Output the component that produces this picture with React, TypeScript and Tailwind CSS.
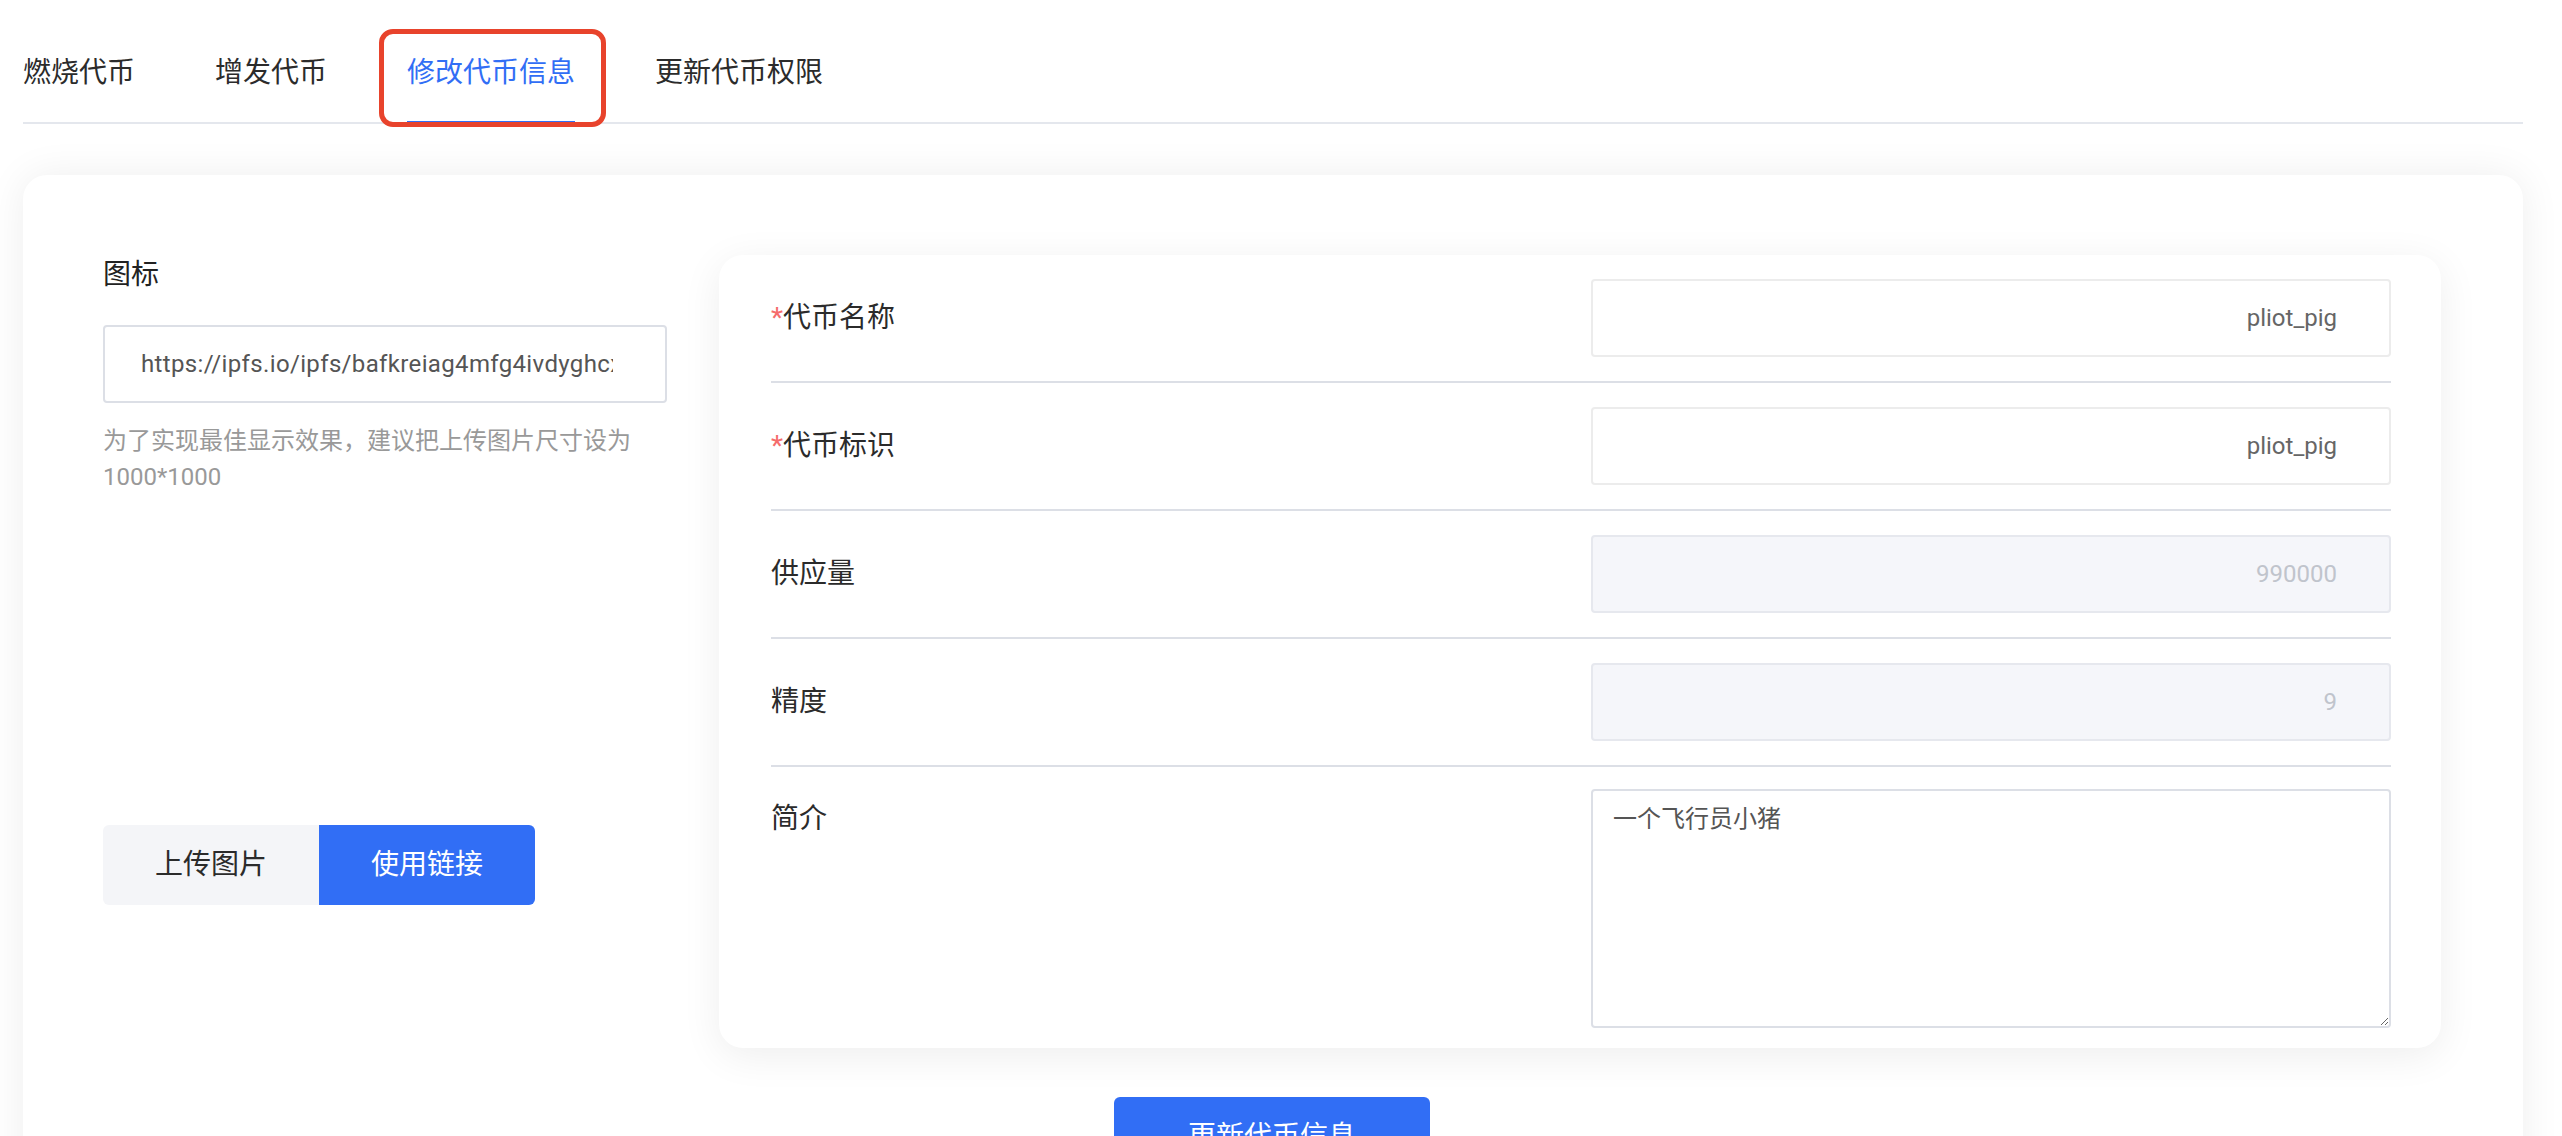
import React from "react";

const tabs = ["燃烧代币", "增发代币", "修改代币信息", "更新代币权限"];

function Row({
  label,
  required,
  value,
  disabled,
}: {
  label: string;
  required?: boolean;
  value: string;
  disabled?: boolean;
}) {
  return (
    <div className="flex items-center justify-between py-[24px] border-b-2 border-[#dcdfe6]">
      <div className="text-[28px] leading-[40px] text-[#2b2b2b]">
        {required && <span className="text-[#f56c6c]">*</span>}
        {label}
      </div>
      <input
        readOnly
        defaultValue={value}
        className={
          disabled
            ? "w-[800px] h-[78px] rounded-[4px] border-2 border-[#e6e8ee] bg-[#f5f6fa] text-right pr-[52px] text-[24px] text-[#c0c4cc] outline-none"
            : "w-[800px] h-[78px] rounded-[4px] border-2 border-[#ececec] bg-white text-right pr-[52px] text-[24px] text-[#666] outline-none"
        }
      />
    </div>
  );
}

export default function App() {
  return (
    <div className="min-h-screen bg-white pl-[23px] pr-[39px] font-['Roboto','Noto_Sans_CJK_SC',sans-serif]">
      {/* tabs */}
      <div className="flex gap-[80px] border-b-2 border-[#e4e7ed]">
        {tabs.map((t, i) => (
          <div
            key={t}
            className={
              i === 2
                ? "relative pt-[53px] pb-[28px] -mb-[2px] border-b-[3px] border-[#316ef5] text-[28px] leading-[40px] text-[#316ef5]"
                : "relative pt-[53px] pb-[28px] -mb-[2px] border-b-[3px] border-transparent text-[28px] leading-[40px] text-[#2b2b2b]"
            }
          >
            {t}
            {i === 2 && (
              <div className="absolute left-[-28px] right-[-31px] top-[29px] bottom-[-6px] border-[5px] border-[#e8432c] rounded-[14px] pointer-events-none" />
            )}
          </div>
        ))}
      </div>

      {/* main card */}
      <div className="mt-[51px] bg-white rounded-[24px] shadow-[0_0_40px_rgba(0,0,0,0.07)] pt-[80px] pl-[80px] pr-[82px] pb-[40px]">
        <div className="flex gap-[52px]">
          {/* left column */}
          <div className="w-[564px] flex flex-col">
            <div className="text-[28px] leading-[40px] text-[#222]">图标</div>
            <input
              readOnly
              defaultValue="https://ipfs.io/ipfs/bafkreiag4mfg4ivdyghcxqz7k3m2d5nl6wqfuuz4yti3p7xav5q"
              className="mt-[30px] w-full h-[78px] rounded-[4px] border-2 border-[#dcdfe6] pl-[36px] pr-[52px] text-[24px] tracking-[0.35px] text-[#555] outline-none"
            />
            <p className="mt-[20px] text-[24px] leading-[36px] text-[#999]">
              为了实现最佳显示效果，建议把上传图片尺寸设为1000*1000
            </p>
            <div className="mt-[330px] flex">
              <button className="w-[216px] h-[80px] rounded-l-[6px] bg-[#f4f5f8] text-[28px] text-[#2b2b2b]">
                上传图片
              </button>
              <button className="w-[216px] h-[80px] rounded-r-[6px] bg-[#316ef5] text-[28px] text-white">
                使用链接
              </button>
            </div>
          </div>

          {/* form card */}
          <div className="flex-1 bg-white rounded-[24px] shadow-[0_8px_40px_rgba(0,0,0,0.07)] pl-[52px] pr-[50px]">
            <Row label="代币名称" required value="pliot_pig" />
            <Row label="代币标识" required value="pliot_pig" />
            <Row label="供应量" value="990000" disabled />
            <Row label="精度" value="9" disabled />
            <div className="flex items-start justify-between pt-[22px] pb-[20px]">
              <div className="pt-[10px] text-[28px] leading-[40px] text-[#2b2b2b]">简介</div>
              <textarea
                readOnly
                defaultValue="一个飞行员小猪"
                className="w-[800px] h-[239px] rounded-[4px] border-2 border-[#dcdfe6] pt-[10px] px-[20px] text-[24px] leading-[36px] text-[#555] outline-none"
              />
            </div>
          </div>
        </div>

        <div className="flex justify-center mt-[49px]">
          <button className="w-[316px] h-[80px] rounded-[6px] bg-[#316ef5] text-[28px] text-white">
            更新代币信息
          </button>
        </div>
      </div>
    </div>
  );
}
